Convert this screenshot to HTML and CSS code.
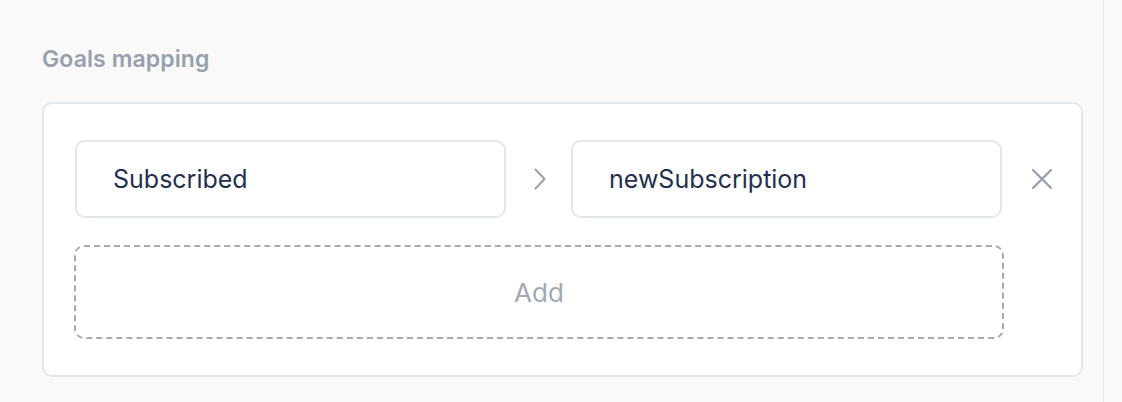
FILE: index.html
```html
<!DOCTYPE html>
<html>
<head>
<meta charset="utf-8">
<link rel="stylesheet" href="styles.css">
</head>
<body>
<div class="page">
  <main class="main">
    <h2 class="label">Goals mapping</h2>
    <section class="card">
      <div class="row">
        <div class="field">Subscribed</div>
        <div class="arrow">
          <svg width="14" height="22" viewBox="0 0 14 22"><path d="M2.5 1.5 L11.5 11 L2.5 20.5" fill="none" stroke="#97a1ae" stroke-width="2" stroke-linecap="round" stroke-linejoin="round"/></svg>
        </div>
        <div class="field">newSubscription</div>
        <div class="remove">
          <svg width="22" height="22" viewBox="0 0 22 22"><path d="M2 2 L20 20 M20 2 L2 20" stroke="#97a1ae" stroke-width="2.4" stroke-linecap="round"/></svg>
        </div>
      </div>
      <div class="add">Add</div>
    </section>
  </main>
  <aside class="side"></aside>
</div>
</body>
</html>
```

FILE: styles.css
```css
* { box-sizing: border-box; }
html, body { margin: 0; padding: 0; }
body {
  background: #f9f9fa;
  font-family: Inter, "Noto Sans", sans-serif;
  width: 1122px;
  height: 402px;
  overflow: hidden;
}
.page {
  display: flex;
  height: 402px;
}
.main {
  width: 1104px;
  border-right: 1px solid #e4e6e9;
  padding: 44px 20px 0 42px;
}
.label {
  margin: 0 0 27px 0;
  font-size: 23px;
  line-height: 31px;
  font-weight: 600;
  color: #97a1ae;
  letter-spacing: 0.1px;
}
.card {
  width: 1041px;
  height: 275px;
  background: #fff;
  border: 2px solid #e3e7eb;
  border-radius: 10px;
  padding: 36px 0 0 31px;
}
.row {
  display: flex;
  align-items: center;
  height: 78px;
}
.field {
  width: 431px;
  height: 78px;
  border: 2px solid #e3e7eb;
  border-radius: 10px;
  display: flex;
  align-items: center;
  padding-left: 36px;
  font-size: 25px;
  color: #24304f;
}
.arrow {
  width: 65px;
  display: flex;
  justify-content: center;
  padding-left: 2px;
}
.remove {
  width: 78px;
  display: flex;
  justify-content: center;
  padding-left: 2px;
}
.add {
  margin-top: 27px;
  width: 930px;
  height: 94px;
  margin-left: -1px;
  border: 2px dashed #a3abb7;
  border-radius: 10px;
  display: flex;
  align-items: center;
  justify-content: center;
  font-size: 26px;
  color: #a0a9b5;
}
.side { flex: 1; }
```
